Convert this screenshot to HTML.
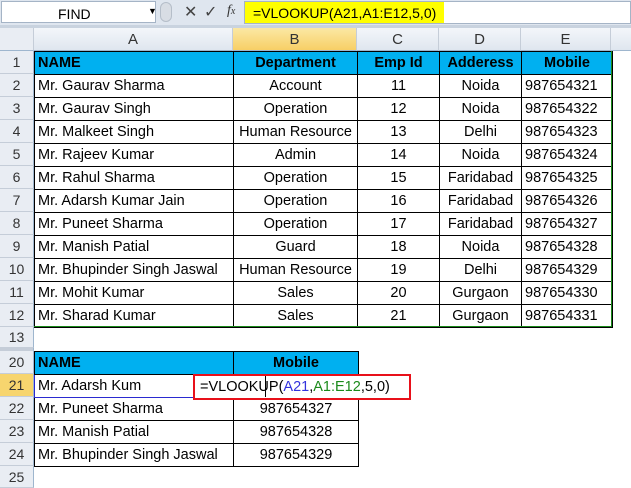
<!DOCTYPE html>
<html><head><meta charset="utf-8"><style>
*{margin:0;padding:0;box-sizing:border-box}
body{width:631px;height:488px;overflow:hidden;background:#fff;font-family:"Liberation Sans",sans-serif;position:relative}
.abs{position:absolute}
.rh{position:absolute;left:0;width:34px;background:#e9edf3;border-right:1px solid #9eb6ce;border-bottom:1px solid #c5cdd8;color:#333;font-size:14px;text-align:center;display:flex;align-items:center;justify-content:center}
.ch{position:absolute;top:28px;height:23px;background:linear-gradient(#f3f6fa,#dfe6ef);border-right:1px solid #c5cdd8;border-bottom:1px solid #9eb6ce;font-size:15px;color:#333;display:flex;align-items:center;justify-content:center}
table{position:absolute;border-collapse:collapse;table-layout:fixed;font-size:14.5px}
td{height:23px;border:1px solid #000;padding:0 3px;white-space:nowrap;overflow:hidden;color:#000}
td.c{text-align:center}
tr.h td{background:#00b0f0;font-weight:bold}
</style></head><body>
<!-- formula bar -->
<div class="abs" style="left:0;top:0;width:631px;height:28px;background:#dfe6ef"></div>
<div class="abs" style="left:1px;top:1px;width:155px;height:22px;background:#fff;border:1px solid #a5b4c6;font-size:14px;padding:4px 0 0 56px">FIND<span style="position:absolute;left:146px;top:4px;font-size:9px">▼</span></div>
<div class="abs" style="left:160px;top:2px;width:12px;height:20px;border-radius:6px;background:#d8dde4;border:1px solid #b5bec9"></div>
<div class="abs" style="left:184px;top:2px;font-size:16px;color:#444">✕</div>
<div class="abs" style="left:204px;top:2px;font-size:16px;color:#444">✓</div>
<div class="abs" style="left:227px;top:3px;font-size:14px;font-style:italic;font-family:'Liberation Serif',serif;color:#333">f<span style="font-size:10px">x</span></div>
<div class="abs" style="left:244px;top:1px;width:387px;height:23px;background:#fff;border:1px solid #a5b4c6"></div>
<div class="abs" style="left:245px;top:2px;height:21px;background:#ffff00;font-size:14px;padding:3px 8px 0 8px;white-space:nowrap">=VLOOKUP(A21,A1:E12,5,0)</div>
<div class="abs" style="left:0;top:25px;width:631px;height:3px;background:#c9d3df"></div>
<!-- column headers -->
<div class="ch" style="left:0;width:34px;background:#e9edf3"></div>
<div class="ch" style="left:34px;width:199px">A</div>
<div class="ch" style="left:233px;width:124px;background:linear-gradient(#fbe8a4,#f7cf66)">B</div>
<div class="ch" style="left:357px;width:82px">C</div>
<div class="ch" style="left:439px;width:82px">D</div>
<div class="ch" style="left:521px;width:90px">E</div>
<div class="ch" style="left:611px;width:20px;border-right:none"></div>
<!-- row headers -->
<div class="rh" style="top:51px;height:23px">1</div>
<div class="rh" style="top:74px;height:23px">2</div>
<div class="rh" style="top:97px;height:23px">3</div>
<div class="rh" style="top:120px;height:23px">4</div>
<div class="rh" style="top:143px;height:23px">5</div>
<div class="rh" style="top:166px;height:23px">6</div>
<div class="rh" style="top:189px;height:23px">7</div>
<div class="rh" style="top:212px;height:23px">8</div>
<div class="rh" style="top:235px;height:23px">9</div>
<div class="rh" style="top:258px;height:23px">10</div>
<div class="rh" style="top:281px;height:23px">11</div>
<div class="rh" style="top:304px;height:23px">12</div>
<div class="rh" style="top:327px;height:21px">13</div>
<div class="rh" style="top:348px;height:3px;background:#c5cdd8"></div>
<div class="rh" style="top:351px;height:23px">20</div>
<div class="rh" style="top:374px;height:23px;background:#f7d56e">21</div>
<div class="rh" style="top:397px;height:23px">22</div>
<div class="rh" style="top:420px;height:23px">23</div>
<div class="rh" style="top:443px;height:23px">24</div>
<div class="rh" style="top:466px;height:22px">25</div>

<table style="left:34px;top:51px;width:578px">
<colgroup><col style="width:199px"><col style="width:124px"><col style="width:82px"><col style="width:82px"><col style="width:91px"></colgroup>
<tr class="h"><td>NAME</td><td class="c">Department</td><td class="c">Emp Id</td><td class="c">Adderess</td><td class="c">Mobile</td></tr>
<tr><td>Mr. Gaurav Sharma</td><td class="c">Account</td><td class="c">11</td><td class="c">Noida</td><td>987654321</td></tr>
<tr><td>Mr. Gaurav Singh</td><td class="c">Operation</td><td class="c">12</td><td class="c">Noida</td><td>987654322</td></tr>
<tr><td>Mr. Malkeet Singh</td><td class="c">Human Resource</td><td class="c">13</td><td class="c">Delhi</td><td>987654323</td></tr>
<tr><td>Mr. Rajeev Kumar</td><td class="c">Admin</td><td class="c">14</td><td class="c">Noida</td><td>987654324</td></tr>
<tr><td>Mr. Rahul Sharma</td><td class="c">Operation</td><td class="c">15</td><td class="c">Faridabad</td><td>987654325</td></tr>
<tr><td>Mr. Adarsh Kumar Jain</td><td class="c">Operation</td><td class="c">16</td><td class="c">Faridabad</td><td>987654326</td></tr>
<tr><td>Mr. Puneet Sharma</td><td class="c">Operation</td><td class="c">17</td><td class="c">Faridabad</td><td>987654327</td></tr>
<tr><td>Mr. Manish Patial</td><td class="c">Guard</td><td class="c">18</td><td class="c">Noida</td><td>987654328</td></tr>
<tr><td>Mr. Bhupinder Singh Jaswal</td><td class="c">Human Resource</td><td class="c">19</td><td class="c">Delhi</td><td>987654329</td></tr>
<tr><td>Mr. Mohit Kumar</td><td class="c">Sales</td><td class="c">20</td><td class="c">Gurgaon</td><td>987654330</td></tr>
<tr><td>Mr. Sharad Kumar</td><td class="c">Sales</td><td class="c">21</td><td class="c">Gurgaon</td><td>987654331</td></tr>
</table>
<div class="abs" style="left:34px;top:51px;width:578px;height:276px;border:1px solid #1a8a1a;border-top:none;border-left:none"></div>

<table style="left:34px;top:351px;width:324px">
<colgroup><col style="width:199px"><col style="width:125px"></colgroup>
<tr class="h"><td>NAME</td><td class="c">Mobile</td></tr>
<tr><td style="border:1px solid #2a2ad0">Mr. Adarsh Kum</td><td></td></tr>
<tr><td>Mr. Puneet Sharma</td><td class="c">987654327</td></tr>
<tr><td>Mr. Manish Patial</td><td class="c">987654328</td></tr>
<tr><td>Mr. Bhupinder Singh Jaswal</td><td class="c">987654329</td></tr>
</table>
<div class="abs" style="left:193px;top:374px;width:218px;height:26px;border:2px solid #e8101a;background:#fff;font-size:14.5px;padding:3px 0 0 5px;white-space:nowrap">=VLOOKUP(<span style="color:#3333dd">A21</span>,<span style="color:#1a8a1a">A1:E12</span>,5,0)</div>
<div class="abs" style="left:265px;top:376px;width:1px;height:21px;background:#000"></div>
</body></html>
